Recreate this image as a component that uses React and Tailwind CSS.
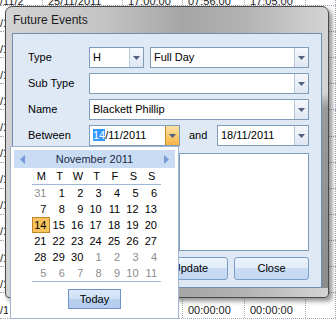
import React from "react";

const cols = [43, 80, 60, 62, 61, 30];

const Tri = ({ color = "#4f5f7e" }) => (
  <svg width="7" height="4" viewBox="0 0 7 4">
    <path d="M0 0h7L3.5 4z" fill={color} />
  </svg>
);

const DropBtn = ({ orange }) => (
  <div
    className={
      orange
        ? "w-[14px] flex items-center justify-center border-l border-[#c48a2a] bg-[linear-gradient(#fde2a4,#f6b446)]"
        : "w-[14px] flex items-center justify-center border-l border-[#b7c7dc] bg-[linear-gradient(#f5f8fc,#dfe7f2)]"
    }
  >
    <Tri />
  </div>
);

const Combo = ({ value = "", className = "" }) => (
  <div className={`flex h-[21px] border border-[#7f9db9] bg-white ${className}`}>
    <div className="flex-1 pl-[3px] leading-[19px] whitespace-nowrap overflow-hidden">{value}</div>
    <DropBtn />
  </div>
);

const DatePicker = ({ day, rest, active, className = "" }) => (
  <div className={`flex h-[21px] border border-[#7f9db9] bg-white ${className}`}>
    <div className="flex-1 pl-[3px] leading-[19px] whitespace-nowrap">
      <span className={active ? "bg-[#3399ff] text-white" : ""}>{day}</span>
      {rest}
    </div>
    <DropBtn orange={active} />
  </div>
);

const Row = ({ label, children }) => (
  <div className="flex items-center h-[21px]">
    <div className="w-[61px]">{label}</div>
    {children}
  </div>
);

const Button = ({ children }) => (
  <div className="w-[75px] h-[23px] flex items-center justify-center rounded-[3px] border border-[#7b9ec9] bg-[linear-gradient(#edf4fc_0%,#e2ecf9_45%,#cadcf3_50%,#c2d7f1_100%)]">
    {children}
  </div>
);

const weeks = [
  [31, 1, 2, 3, 4, 5, 6],
  [7, 8, 9, 10, 11, 12, 13],
  [14, 15, 16, 17, 18, 19, 20],
  [21, 22, 23, 24, 25, 26, 27],
  [28, 29, 30, 1, 2, 3, 4],
  [5, 6, 7, 8, 9, 10, 11],
];

const Calendar = () => (
  <div className="absolute left-[10px] top-[146px] w-[169px] h-[173px] border border-[#a3b6d1] bg-white p-[3px]">
    <div className="h-[18px] flex items-center justify-between px-[6px] bg-[#cadcf4]">
      <svg width="5" height="9" viewBox="0 0 5 9">
        <path d="M5 0v9L0 4.5z" fill="#729bd5" />
      </svg>
      <span className="text-[#1b2a44]">November 2011</span>
      <svg width="5" height="9" viewBox="0 0 5 9">
        <path d="M0 0v9l5-4.5z" fill="#729bd5" />
      </svg>
    </div>
    <div className="ml-[18px] w-[129px]">
      <div className="grid grid-cols-7 h-[17px] border-b border-[#9db7d9] items-center text-center">
        {["M", "T", "W", "T", "F", "S", "S"].map((d, i) => (
          <span key={i}>{d}</span>
        ))}
      </div>
      <div className="border-b border-[#9db7d9]">
        {weeks.map((w, wi) => (
          <div key={wi} className="grid grid-cols-7 h-[16px]">
            {w.map((d, di) => {
              const grey = (wi === 0 && d > 7) || (wi >= 4 && d < 15);
              const sel = wi === 2 && di === 0;
              return (
                <span
                  key={di}
                  className={
                    sel
                      ? "text-right pr-[3px] leading-[14px] border border-[#c2862a] bg-[#f8c35c]"
                      : grey
                      ? "text-right pr-[4px] leading-[16px] text-[#8c8c8c]"
                      : "text-right pr-[4px] leading-[16px]"
                  }
                >
                  {d}
                </span>
              );
            })}
          </div>
        ))}
      </div>
    </div>
    <div className="mt-[7px] mx-auto w-[53px] h-[20px] flex items-center justify-center border border-[#6e92c6] bg-[linear-gradient(#dbe8f9_0%,#cfe0f6_50%,#b8cff0_51%,#b6cdef_100%)]">
      Today
    </div>
  </div>
);

const rows = [
  ["/11/2", "25/11/2011", "17:00:00", "07:56:00", "17:05:00", ""],
  ...Array.from({ length: 11 }, () => ["/1", "", "", "", "", ""]),
  ["/1", "", "", "00:00:00", "00:00:00", ""],
];

const Background = () => (
  <div className="absolute left-0 right-0 top-[-20px] flex flex-col text-[#222]">
    {rows.map((r, ri) => (
      <div key={ri} className="flex h-[26.1px] border-b border-dotted border-[#a3abb8]">
        {r.map((t, i) => (
          <div
            key={i}
            style={{ width: cols[i] }}
            className={`flex items-end ${ri === 0 ? "leading-[8px]" : ""} ${i === 0 ? "pl-0" : "pl-[5px]"} whitespace-nowrap overflow-hidden border-r border-dotted border-[#a3abb8]`}
          >
            {t && (
              <span className={i === 0 && ri > 0 ? "w-[8px] overflow-hidden" : ""}>{t}</span>
            )}
          </div>
        ))}
      </div>
    ))}
  </div>
);

export default function App() {
  return (
    <div className="relative w-[336px] h-[323px] overflow-hidden bg-white font-['Liberation_Sans',Arial,sans-serif] text-[11px] text-black">
      <Background />
      <div className="absolute left-[5px] top-[6px] w-[324px] h-[292px] flex flex-col rounded-t-[7px] rounded-b-[4px] border border-[#4a4a4a] bg-[linear-gradient(90deg,#d3d3d3_0%,#c4c4c4_30%,#a6a6a6_55%,#b4b4b4_75%,#d4d4d4_100%)] shadow-[3px_3px_5px_rgba(0,0,0,0.45)] pl-[6px] pb-[9px]">
        <div className="h-[26px] flex items-center pl-[1px] text-[12px] text-[#1c1c1c]">Future Events</div>
        <div className="flex-1 flex">
          <div className="flex-1 border border-[#6f8cb1] bg-[#dfe9f6] pl-[15px] pr-[12px] pt-[13px]">
            <div className="flex flex-col gap-[5px]">
              <Row label="Type">
                <Combo className="w-[55px]" value="H" />
                <Combo className="w-[159px] ml-[6px]" value="Full Day" />
              </Row>
              <Row label="Sub Type">
                <Combo className="w-[220px]" />
              </Row>
              <Row label="Name">
                <Combo className="w-[220px]" value="Blackett Phillip" />
              </Row>
              <Row label="Between">
                <DatePicker className="w-[91px]" day="14" rest="/11/2011" active />
                <div className="flex-1 pl-[9px]">and</div>
                <DatePicker className="w-[92px]" day="18" rest="/11/2011" />
              </Row>
            </div>
            <div className="mt-[7px] ml-[151px] w-[130px] h-[98px] border border-[#7f9db9] bg-white" />
            <div className="mt-[6px] flex justify-end gap-[6px]">
              <Button>Update</Button>
              <Button>Close</Button>
            </div>
          </div>
          <div className="w-[6px] bg-[linear-gradient(to_bottom,transparent_0px,transparent_60px,#9a9a9a_75px,#8c8c8c_100%)]" />
        </div>
      </div>
      <Calendar />
    </div>
  );
}
